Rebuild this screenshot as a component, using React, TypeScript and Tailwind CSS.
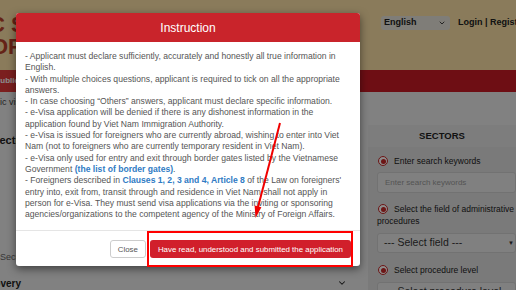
import { ChevronDown } from "lucide-react";

function Radio() {
  return (
    <span className="w-[10px] h-[10px] rounded-full border border-[#c62828] flex items-center justify-center bg-white shrink-0">
      <span className="w-[5px] h-[5px] rounded-full bg-[#c62828]" />
    </span>
  );
}

function PageBehind() {
  return (
    <div className="w-[516px] h-[290px] bg-[#ececec] flex flex-col overflow-hidden">
      <header className="h-[70px] shrink-0 bg-[#fbe1a6] flex">
        <div className="w-[381px] shrink-0 overflow-hidden text-[#b8412a] font-bold text-[22px] leading-[22px] pt-[14px] whitespace-nowrap">
          <div className="-ml-[11px]">C SERVICES</div>
          <div className="-ml-[9px]">OF</div>
        </div>
        <div className="flex items-start gap-[8px] pt-[16px]">
          <div className="w-[69px] h-[14px] rounded-[3px] bg-[#e8e4da] flex items-center justify-between pl-[3px] pr-[4px] text-[9px] font-bold text-[#222]">
            English
            <ChevronDown size={8} strokeWidth={2.5} />
          </div>
          <div className="text-[9px] font-bold text-[#222] leading-[12px] whitespace-nowrap">
            Login | Register
          </div>
        </div>
      </header>
      <nav className="h-[22px] shrink-0 bg-[#c81b26] flex items-center">
        <div className="h-full bg-[#e03a3a] -ml-[6px] px-[1px] flex items-center text-white font-bold text-[8px]">
          Public services
        </div>
      </nav>
      <div className="flex flex-1 min-h-0">
        <div className="w-[356px] shrink-0 flex flex-col">
          <div className="text-[9px] text-[#444] -ml-[18px] mt-[4px]">Public visa services</div>
          <div className="text-[11px] font-bold text-[#222] -ml-[11px] mt-[22px]">Electronic visa</div>
          <div className="text-[9px] text-[#666] mt-[103px]">Security</div>
          <div className="flex items-center justify-between mt-[11px] pr-[9px]">
            <span className="text-[10px] font-bold text-[#222] -ml-[24px]">Recovery</span>
            <ChevronDown size={10} strokeWidth={2.5} className="text-[#222]" />
          </div>
        </div>
        <div className="flex-1 mt-[33px] ml-[12px] bg-[#dedede] flex flex-col">
          <div className="h-[22px] shrink-0 bg-[#e4e4e4] flex items-center justify-center text-[9.5px] font-bold text-[#222]">
            SECTORS
          </div>
          <div className="pl-[9px] pt-[8px] flex flex-col text-[8.5px] text-[#222] whitespace-nowrap">
            <div className="flex items-center gap-[6px] pl-[1px] h-[12px]">
              <Radio />
              Enter search keywords
            </div>
            <div className="mt-[5px] h-[21px] shrink-0 border border-[#cfcfcf] rounded-[3px] bg-[#eaeaea] flex items-center pl-[7px] text-[#999] text-[8px]">
              Enter search keywords
            </div>
            <div className="mt-[10px] flex items-center gap-[6px] pl-[1px] h-[12px]">
              <Radio />
              Select the field of administrative
            </div>
            <div className="leading-[12px]">procedures</div>
            <div className="mt-[6px] h-[20px] shrink-0 border border-[#cfcfcf] rounded-[3px] bg-[#eaeaea] flex items-center justify-between pl-[6px] text-[#333] text-[10.5px]">
              --- Select field ---
              <span className="text-[6px] pr-[1px]">▼</span>
            </div>
            <div className="mt-[11px] flex items-center gap-[6px] pl-[1px] h-[12px]">
              <Radio />
              Select procedure level
            </div>
            <div className="mt-[6px] h-[20px] shrink-0 border border-[#cfcfcf] rounded-[3px] bg-[#eaeaea] flex items-center pl-[6px] text-[#333] text-[10.5px]">
              --- Select procedure level ---
            </div>
          </div>
        </div>
      </div>
    </div>
  );
}

export default function App() {
  const link = "font-bold text-[#2f7bc4]";
  return (
    <div className="relative w-[516px] h-[290px] overflow-hidden font-['Liberation_Sans',Arial,sans-serif]">
      <PageBehind />
      <div className="absolute inset-0 bg-black/45" />

      <div className="absolute left-[16px] top-[13px] w-[344px] rounded-[3px] bg-white shadow-[0_3px_9px_rgba(0,0,0,0.5)] overflow-hidden">
        <div className="h-[29px] bg-[#c9242b] flex items-center justify-center text-white text-[12px]">
          Instruction
        </div>
        <div className="px-[9px] pt-[9px] pb-[10px] text-[8.6px] leading-[11.3px] text-[#555] whitespace-nowrap">
          <div>
            - Applicant must declare sufficiently, accurately and honestly all true information in
            <br />
            English.
          </div>
          <div>
            - With multiple choices questions, applicant is required to tick on all the appropriate
            <br />
            answers.
          </div>
          <div>- In case choosing “Others” answers, applicant must declare specific information.</div>
          <div>
            - e-Visa application will be denied if there is any dishonest information in the
            <br />
            application found by Viet Nam Immigration Authority.
          </div>
          <div>
            - e-Visa is issued for foreigners who are currently abroad, wishing to enter into Viet
            <br />
            Nam (not to foreigners who are currently temporary resident in Viet Nam).
          </div>
          <div>
            - e-Visa only used for entry and exit through border gates listed by the Vietnamese
            <br />
            Government <span className={link}>(the list of border gates)</span>.
          </div>
          <div>
            - Foreigners described in <span className={link}>Clauses 1, 2, 3 and 4, Article 8</span> of the Law on
            foreigners'
            <br />
            entry into, exit from, transit through and residence in Viet Nam shall not apply in
            <br />
            person for e-Visa. They must send visa applications via the inviting or sponsoring
            <br />
            agencies/organizations to the competent agency of the Ministry of Foreign Affairs.
          </div>
        </div>
        <div className="border-t border-[#e5e5e5] flex justify-end gap-[4px] pt-[9px] pb-[8px] pr-[9px]">
          <button className="h-[18px] px-[7px] border border-[#ccc] rounded-[3px] bg-white text-[#555] text-[7.9px]">
            Close
          </button>
          <button className="h-[18px] px-[8px] rounded-[3px] bg-[#d11f2b] text-white text-[7.9px]">
            Have read, understood and submitted the application
          </button>
        </div>
      </div>

      <div className="absolute left-[147px] top-[231px] w-[206px] h-[36px] border-2 border-[#ff0000]" />
      <svg className="absolute inset-0 pointer-events-none" width="516" height="290" viewBox="0 0 516 290">
        <line x1="280" y1="123" x2="257.5" y2="209" stroke="#f00000" strokeWidth="2" />
        <polygon points="255.5,218 261.4,207.2 254.6,205.4" fill="#f00000" />
      </svg>
    </div>
  );
}
